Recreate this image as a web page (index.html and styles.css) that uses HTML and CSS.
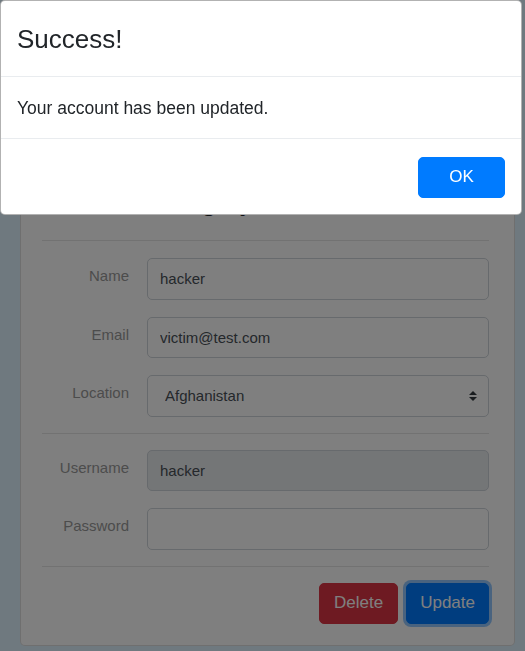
FILE: index.html
```html
<!DOCTYPE html>
<html lang="en">
<head>
<meta charset="utf-8">
<title>Account</title>
<link rel="stylesheet" href="styles.css">
</head>
<body>
<div class="page">
  <div class="card">
    <h3 class="card-title">Manage your account</h3>
    <hr class="sep sep-top">
    <div class="group">
      <div class="row"><label class="lbl">Name</label><input class="ctl" type="text" value="hacker"></div>
      <div class="row"><label class="lbl">Email</label><input class="ctl" type="text" value="victim@test.com"></div>
      <div class="row"><label class="lbl">Location</label>
        <div class="select-wrap">
          <select class="ctl sel"><option>Afghanistan</option></select>
          <svg class="sel-arrow" width="8" height="10" viewBox="0 0 4 5"><path d="M2 0L0 2h4zm0 5L0 3h4z" fill="#343a40"/></svg>
        </div>
      </div>
    </div>
    <hr class="sep">
    <div class="group">
      <div class="row"><label class="lbl">Username</label><input class="ctl ctl-disabled" type="text" value="hacker" disabled></div>
      <div class="row"><label class="lbl">Password</label><input class="ctl" type="password" value=""></div>
    </div>
    <hr class="sep">
    <div class="actions">
      <button class="btn btn-danger">Delete</button>
      <button class="btn btn-primary btn-focus">Update</button>
    </div>
  </div>
</div>
<div class="backdrop"></div>
<div class="modal">
  <div class="modal-header"><h5 class="modal-title">Success!</h5></div>
  <div class="modal-body">Your account has been updated.</div>
  <div class="modal-footer"><button class="btn btn-primary btn-ok">OK</button></div>
</div>
</body>
</html>
```
FILE: styles.css
```css
* { box-sizing: border-box; }
html, body { margin: 0; padding: 0; height: 100%; overflow: hidden; }
body {
  background: rgb(222, 242, 255);
  font-family: "Liberation Sans", Arial, sans-serif;
  color: #212529;
}
.page { padding: 162px 10px 0 20px; }
.card {
  width: 495px;
  background: #fff;
  border: 1px solid rgba(0, 0, 0, .125);
  border-radius: 5px;
  padding: 21px 25px 21px 21px;
}
.card-title {
  margin: 0;
  font-size: 28px;
  line-height: 34px;
  font-weight: 400;
  text-align: center;
  color: #212529;
}
.sep {
  border: 0;
  border-top: 1px solid rgba(0, 0, 0, .1);
  margin: 0 0 16px;
}
.sep-top { margin-top: 22px; margin-bottom: 17px; }
.group { display: flex; flex-direction: column; gap: 17px; margin-bottom: 16px; }
.row {
  display: grid;
  grid-template-columns: 87px 1fr;
  column-gap: 18px;
  align-items: start;
}
.lbl {
  text-align: right;
  font-size: 15px;
  line-height: 22px;
  padding-top: 7px;
  color: #999;
}
.ctl {
  display: block;
  width: 100%;
  height: 41.5px;
  padding: 0 12px;
  font-family: inherit;
  font-size: 15px;
  color: #495057;
  background: #fff;
  border: 1px solid #ced4da;
  border-radius: 5px;
  outline: none;
}
.ctl-disabled { background: #e9ecef; }
.select-wrap { position: relative; }
.sel { appearance: none; -webkit-appearance: none; padding-left: 17px; }
.sel-arrow { position: absolute; right: 12px; top: 16px; }
.actions { display: flex; justify-content: flex-end; gap: 8px; }
.btn {
  height: 41.5px;
  padding: 0 14px;
  font-family: inherit;
  font-size: 17px;
  color: #fff;
  border: 1px solid transparent;
  border-radius: 5px;
}
.btn-danger { background: #dc3545; border-color: #dc3545; }
.btn-primary { background: #007bff; border-color: #007bff; }
.btn-focus { padding: 0 13px; box-shadow: 0 0 0 3px rgba(38, 143, 255, .5); }
.backdrop {
  position: fixed;
  inset: 0;
  background: rgba(0, 0, 0, .5);
}
.modal {
  position: fixed;
  top: 0;
  left: 0;
  width: 522px;
  background: #fff;
  border: 1px solid rgba(0, 0, 0, .3);
  border-radius: 5px;
}
.modal-header { padding: 19px 16px 17px; border-bottom: 1px solid #e9ecef; }
.modal-title { margin: 0; font-size: 26px; line-height: 39px; font-weight: 400; color: #212529; }
.modal-body { padding: 19px 16px 16px; font-size: 17.5px; line-height: 25.5px; border-bottom: 1px solid #e9ecef; }
.modal-footer { display: flex; justify-content: flex-end; padding: 18px 16px 16px; }
.btn-ok { width: 87px; padding: 0; height: 41px; font-size: 17px; }
```
